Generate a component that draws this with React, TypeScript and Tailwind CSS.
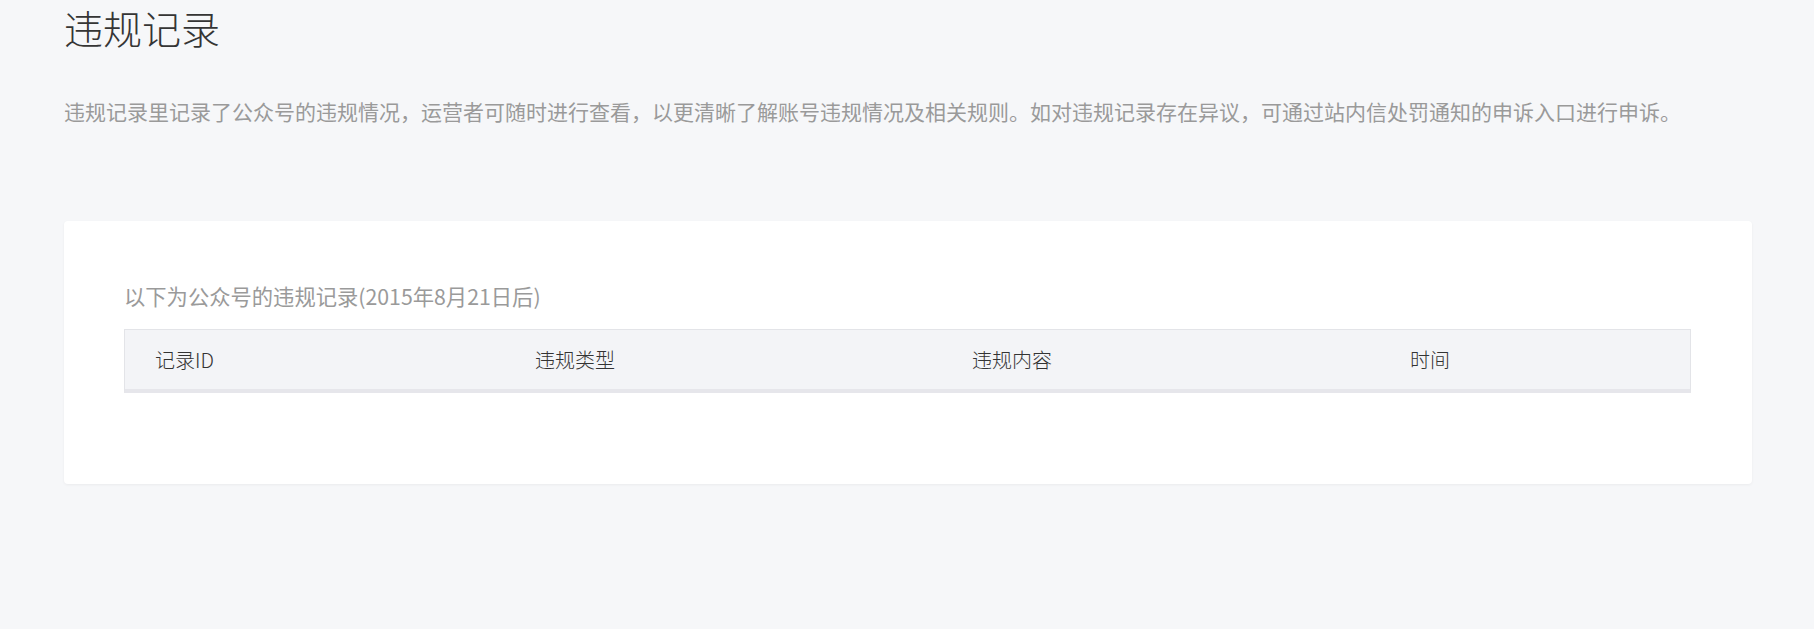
import React from "react";

const font = { fontFamily: '"Noto Sans CJK SC", "Noto Sans", sans-serif' };

export default function App() {
  return (
    <div
      className="w-[1814px] h-[629px] bg-[#f6f7f9] overflow-hidden"
      style={font}
    >
      <div className="px-[64px]">
        <h1 className="text-[39px] leading-[54px] text-[#353535] font-light">违规记录</h1>
        <p className="mt-[42px] text-[21px] leading-[30px] text-[#9a9a9a] whitespace-nowrap">
          违规记录里记录了公众号的违规情况，运营者可随时进行查看，以更清晰了解账号违规情况及相关规则。如对违规记录存在异议，可通过站内信处罚通知的申诉入口进行申诉。
        </p>
        <div className="mt-[95px] w-[1688px] h-[263px] bg-white rounded-[4px] shadow-[0_1px_3px_rgba(0,0,0,0.05)] px-[60px] pt-[58px]">
          <div className="text-[21.3px] leading-[34px] text-[#9a9a9a]">
            以下为公众号的违规记录(2015年8月21日后)
          </div>
          <div className="mt-[16px] w-[1567px] h-[64px] flex items-center bg-[#f3f4f7] border border-[#e3e4e8] border-b-[4px] border-b-[#e6e6eb] text-[20px] text-[#333333] font-light">
            <div className="w-[379px] pl-[30px]">记录ID</div>
            <div className="w-[437px] pl-[31px]">违规类型</div>
            <div className="w-[438px] pl-[31px]">违规内容</div>
            <div className="flex-1 pl-[31px]">时间</div>
          </div>
        </div>
      </div>
    </div>
  );
}
